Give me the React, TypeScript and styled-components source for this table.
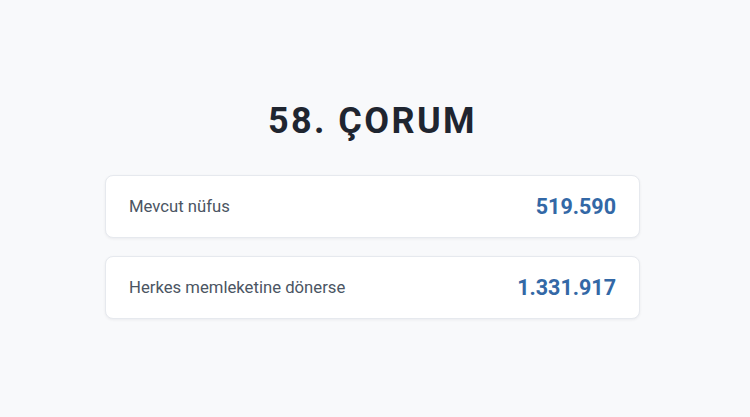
import React from "react";
import styled, { createGlobalStyle } from "styled-components";

const Global = createGlobalStyle`
  html, body { margin: 0; padding: 0; }
  body { background: #f8f9fb; font-family: Roboto, "Noto Sans", sans-serif; }
`;

const Page = styled.main`
  min-height: 417px;
  display: flex;
  flex-direction: column;
  justify-content: center;
  align-items: center;
  box-sizing: border-box;
  padding-right: 5px;
`;

const Title = styled.h1`
  margin: 0 0 32px;
  font-size: 36px;
  line-height: 44px;
  font-weight: 700;
  letter-spacing: 2.4px;
  color: #1f2530;
`;

const List = styled.div`
  width: 535px;
  display: flex;
  flex-direction: column;
  gap: 18px;
`;

const Card = styled.div`
  height: 63px;
  box-sizing: border-box;
  background: #ffffff;
  border: 1px solid #e6e9ee;
  border-radius: 8px;
  box-shadow: 0 1px 3px rgba(15, 23, 42, 0.06);
  display: flex;
  align-items: center;
  justify-content: space-between;
  padding: 0 23px;
`;

const Label = styled.span`
  font-size: 16.7px;
  color: #4b5563;
`;

const Value = styled.span`
  font-size: 21.5px;
  font-weight: 700;
  color: #3368a6;
`;

const rows = [
  { label: "Mevcut nüfus", value: "519.590" },
  { label: "Herkes memleketine dönerse", value: "1.331.917" },
];

export default function App() {
  return (
    <>
      <Global />
      <Page>
        <Title>58. ÇORUM</Title>
        <List>
          {rows.map((r) => (
            <Card key={r.label}>
              <Label>{r.label}</Label>
              <Value>{r.value}</Value>
            </Card>
          ))}
        </List>
      </Page>
    </>
  );
}
